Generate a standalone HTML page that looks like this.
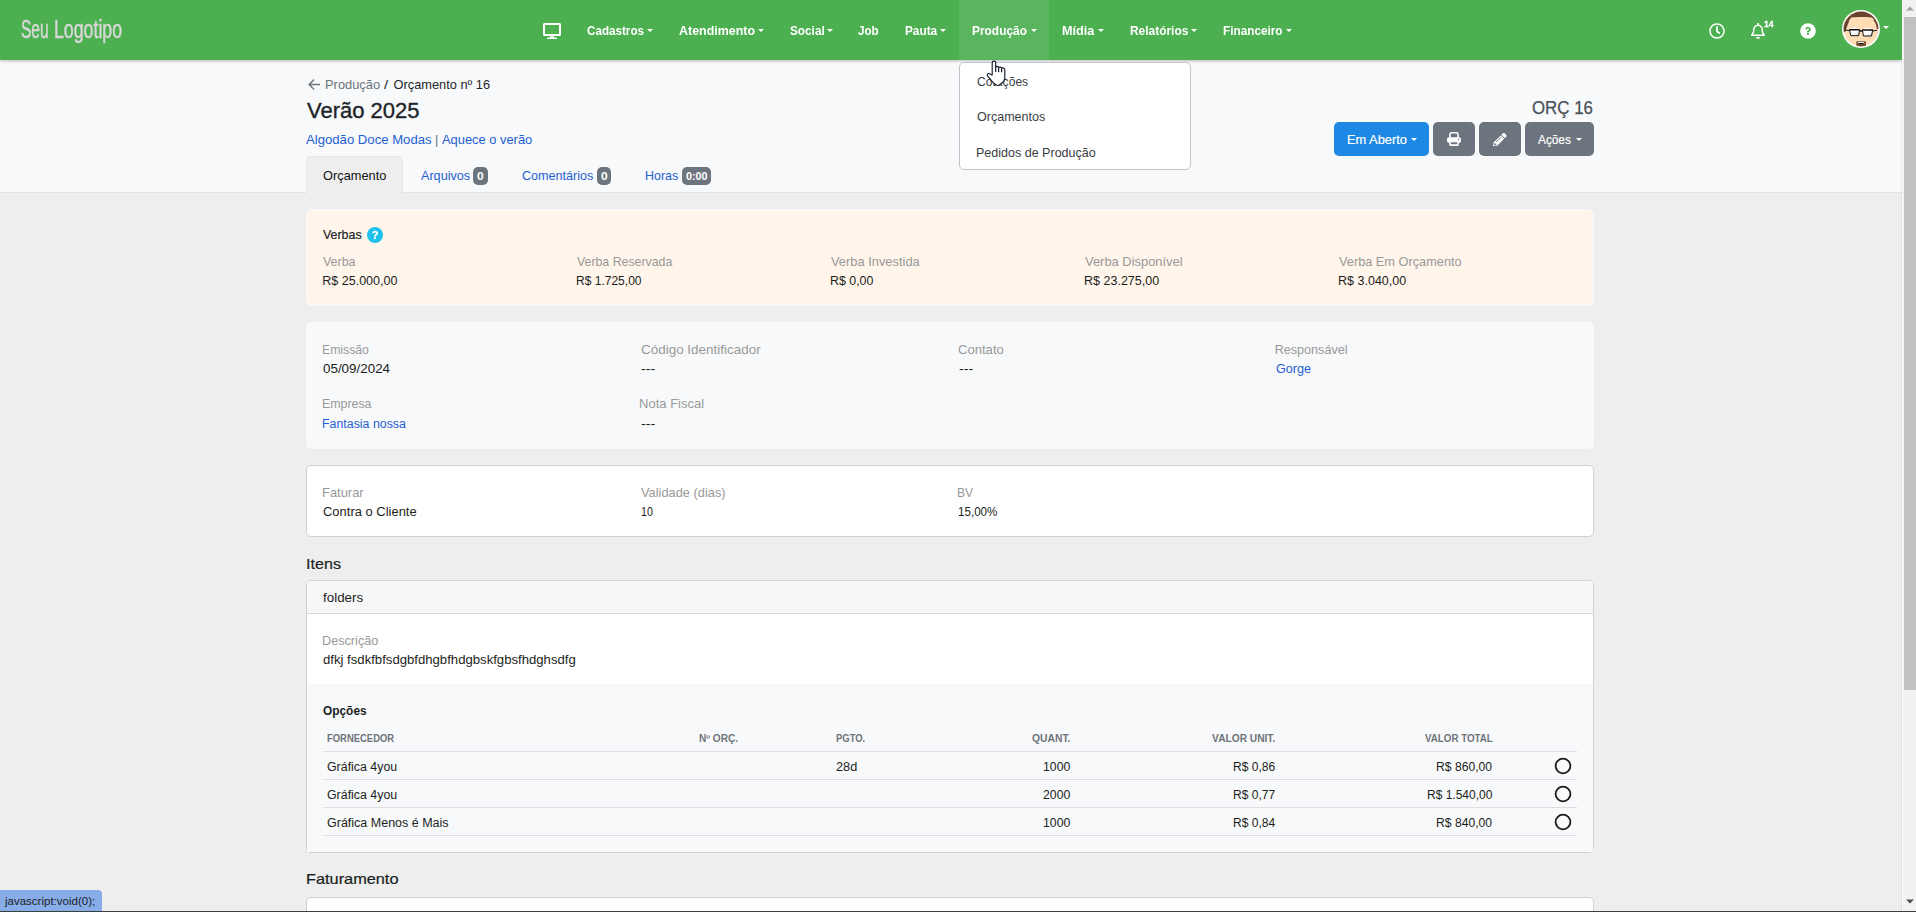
<!DOCTYPE html>
<html lang="pt-br">
<head>
<meta charset="utf-8">
<title>Orçamento nº 16</title>
<style>
*{box-sizing:border-box;margin:0;padding:0}
html,body{width:1916px;height:912px;overflow:hidden}
body{position:relative;background:#eeeeee;font-family:"Liberation Sans",sans-serif;font-size:13px;color:#212529}
.t{position:absolute;white-space:pre;transform-origin:0 50%;display:block}
.b{position:absolute}
.cr{position:absolute;width:0;height:0;border-left:3px solid transparent;border-right:3px solid transparent;border-top:3px solid #fff}
#nav{left:0;top:0;width:1902px;height:60px;background:#4caf50;box-shadow:0 1px 3px rgba(60,50,70,.32)}
#navact{left:959px;top:0;width:90px;height:60px;background:#5ab65e}
#hdr{left:0;top:60px;width:1902px;height:132px;background:#f8f9fa}
#hdrline{left:0;top:192px;width:1902px;height:1px;background:#dfe2e8}
#tab{left:306px;top:156px;width:97px;height:37px;background:#eeeeee;border:1px solid #e3e6ea;border-bottom:0;border-radius:5px 5px 0 0}
.badge{background:#6c757d;border-radius:5px;height:18px;top:167px}
.btn{top:122px;height:34px;border-radius:5px;background:#6c757d}
.card{left:306px;width:1288px;border-radius:5px}
.hl{left:323px;width:1254px;height:1px;background:#dddee1}
.radio{left:1554.7px;width:16.6px;height:16.6px;border:1.9px solid #1d1d1d;border-radius:50%}
#dd{left:959px;top:62px;width:232px;height:108px;background:#fff;border:1px solid #c3c4c7;border-radius:5px}
#sbtrack{left:1902px;top:0;width:14px;height:912px;background:#f1f1f1;border-left:1px solid #fbf7fb}
#sbthumb{left:1904px;top:17px;width:12px;height:673px;background:#c1c1c1}
#status{left:0;top:890px;width:102px;height:21px;background:#87ace8;border-top-right-radius:4px}
#bottomline{left:0;top:911px;width:1916px;height:1px;background:#36403c}
</style>
</head>
<body>
<!-- header background -->
<div class="b" id="hdr"></div>
<div class="b" id="hdrline"></div>
<div class="b" id="tab"></div>
<div class="b badge" style="left:473px;width:15px"></div>
<div class="b badge" style="left:597px;width:14px"></div>
<div class="b badge" style="left:682px;width:29px"></div>
<!-- breadcrumb arrow -->
<svg class="b" style="left:308px;top:79px" width="12" height="11" viewBox="0 0 12 11"><path d="M11.6 5.5H1.2M5.6 1L1.1 5.5l4.5 4.5" fill="none" stroke="#6c757d" stroke-width="1.5" stroke-linecap="round" stroke-linejoin="round"/></svg>
<!-- buttons -->
<div class="b btn" style="left:1334px;width:95px;background:#1e88e5"></div>
<div class="b btn" style="left:1433px;width:42px"></div>
<div class="b btn" style="left:1479px;width:42px"></div>
<div class="b btn" style="left:1525px;width:69px"></div>
<svg class="b" style="left:1447px;top:132.300px" width="14" height="14" viewBox="0 0 14 14"><path d="M3 5.600V2.300a1.500 1.500 0 0 1 1.500-1.500h5A1.500 1.500 0 0 1 11 2.300V5.600" stroke="#fff" stroke-width="1.600" fill="none"/><rect x="0" y="5.300" width="14" height="5.500" rx="1.900" fill="#fff"/><rect x="3" y="9.500" width="8" height="3.600" rx=".6" fill="#6c757d" stroke="#fff" stroke-width="1.600"/><circle cx="11.500" cy="7.400" r=".75" fill="#6c757d"/></svg>
<svg class="b" style="left:1493.3px;top:132.6px" width="13.6" height="13.6" viewBox="0 0 512 512"><path fill="#fff" d="M497.900 142.100l-46.100 46.100c-4.700 4.700-12.300 4.700-17 0l-111-111c-4.700-4.700-4.700-12.300 0-17l46.100-46.100c18.700-18.700 49.100-18.700 67.900 0l60.100 60.100c18.800 18.700 18.800 49.100 0 67.900zM284.200 99.800L21.600 362.400.4 483.900c-2.900 16.400 11.400 30.600 27.800 27.800l121.500-21.300 262.600-262.600c4.700-4.700 4.700-12.300 0-17l-111-111c-4.800-4.700-12.400-4.700-17.100 0zM124.100 339.900c-5.500-5.500-5.500-14.300 0-19.800l154-154c5.500-5.500 14.300-5.500 19.800 0s5.500 14.300 0 19.800l-154 154c-5.500 5.500-14.300 5.500-19.800 0zM88 424h48v36.300l-64.500 11.300-31.100-31.100L51.700 376H88v48z"/></svg>

<!-- VERBAS card -->
<div class="b card" style="top:209px;height:97px;background:#fff5eb;border:1px solid #f6f8fb"></div>
<svg class="b" style="left:367px;top:227px" width="16" height="16" viewBox="0 0 512 512"><circle cx="256" cy="256" r="256" fill="#1fc1ea"/><path fill="#fff" d="M262.650 120c-54.530 0-89.850 22.340-117.580 62.180a12 12 0 0 0 2.580 16.440l34.720 26.320a12 12 0 0 0 16.640-2.080c17.870-22.660 31.130-35.700 59.030-35.700 21.940 0 49.080 14.120 49.080 35.400 0 16.080-13.280 24.340-34.940 36.490-25.260 14.160-58.690 31.790-58.690 75.880V342a12 12 0 0 0 12 12h56a12 12 0 0 0 12-12v-4.200c0-30.570 89.340-31.840 89.340-114.570 0-62.300-64.620-103.230-120.180-103.230zM256 372c-25.360 0-46 20.640-46 46s20.640 46 46 46 46-20.640 46-46-20.640-46-46-46z" transform="translate(256 256) scale(.78) translate(-256 -290)"/></svg>
<!-- INFO card -->
<div class="b card" style="top:322px;height:127px;background:#f8f9fa"></div>
<!-- WHITE card -->
<div class="b card" style="top:465px;height:72px;background:#fff;border:1px solid #d1d1d2"></div>
<!-- ITENS card -->
<div class="b card" style="top:580px;height:273px;background:#fff;border:1px solid #d1d1d2">
  <div class="b" style="left:0;top:0;width:1286px;height:33px;background:#f7f7f7;border-bottom:1px solid #d7d8da;border-radius:4px 4px 0 0"></div>
  <div class="b" style="left:0;top:103px;width:1286px;height:168px;background:#f8f9fa"></div>
</div>
<div class="b hl" style="top:751px"></div>
<div class="b hl" style="top:779px"></div>
<div class="b hl" style="top:807px"></div>
<div class="b hl" style="top:835px"></div>
<svg class="b" style="left:1554px;top:757.0px" width="18" height="18" viewBox="0 0 18 18"><circle cx="9" cy="9" r="7.400" fill="none" stroke="#1c1c1c" stroke-width="1.800"/></svg>
<svg class="b" style="left:1554px;top:785.1px" width="18" height="18" viewBox="0 0 18 18"><circle cx="9" cy="9" r="7.400" fill="none" stroke="#1c1c1c" stroke-width="1.800"/></svg>
<svg class="b" style="left:1554px;top:813.1px" width="18" height="18" viewBox="0 0 18 18"><circle cx="9" cy="9" r="7.400" fill="none" stroke="#1c1c1c" stroke-width="1.800"/></svg>
<!-- FATURAMENTO card (cut) -->
<div class="b card" style="top:897px;height:60px;background:#fff;border:1px solid #d1d1d2"></div>

<span class="t" style="left:324.99px;top:77px;font-size:12.8px;line-height:15px;color:#6c757d;transform:scaleX(1.0063);">Produção</span>
<span class="t" style="left:384.40px;top:77px;font-size:12.8px;line-height:15px;color:#212529;transform:scaleX(1.1500);">/</span>
<span class="t" style="left:393.60px;top:77px;font-size:12.8px;line-height:15px;color:#212529;">Orçamento nº 16</span>
<span class="t" style="left:307.00px;top:99px;font-size:21.4px;line-height:24px;color:#212529;transform:scaleX(1.0283);-webkit-text-stroke:.35px #212529;">Verão 2025</span>
<span class="t" style="left:306.20px;top:132px;font-size:12.8px;line-height:15px;color:#1f60d2;transform:scaleX(1.0266);">Algodão Doce Modas</span>
<span class="t" style="left:435.00px;top:132px;font-size:12.8px;line-height:15px;color:#6c757d;">|</span>
<span class="t" style="left:442.10px;top:132px;font-size:12.8px;line-height:15px;color:#1f60d2;transform:scaleX(1.0064);">Aquece o verão</span>
<span class="t" style="left:323.10px;top:168px;font-size:12.8px;line-height:15px;color:#101214;">Orçamento</span>
<span class="t" style="left:420.80px;top:168px;font-size:12.8px;line-height:15px;color:#1f60d2;transform:scaleX(0.9860);">Arquivos</span>
<span class="t" style="left:522.20px;top:168px;font-size:12.8px;line-height:15px;color:#1f60d2;transform:scaleX(0.9841);">Comentários</span>
<span class="t" style="left:644.93px;top:168px;font-size:12.8px;line-height:15px;color:#1f60d2;transform:scaleX(0.9714);">Horas</span>
<span class="t" style="left:477.20px;top:170px;font-size:11.2px;line-height:12px;color:#fff;font-weight:bold;transform:scaleX(1.0667);">0</span>
<span class="t" style="left:601.40px;top:170px;font-size:11.2px;line-height:12px;color:#fff;font-weight:bold;transform:scaleX(1.0667);">0</span>
<span class="t" style="left:685.90px;top:170px;font-size:11.2px;line-height:12px;color:#fff;font-weight:bold;transform:scaleX(0.9563);">0:00</span>
<span class="t" style="left:1532.20px;top:98px;font-size:18.2px;line-height:20px;color:#495057;transform:scaleX(0.9271);-webkit-text-stroke:.25px #495057;">ORÇ 16</span>
<span class="t" style="left:1347.41px;top:132px;font-size:13px;line-height:15px;color:#fff;transform:scaleX(0.9870);-webkit-text-stroke:.2px #fff;">Em Aberto</span>
<span class="t" style="left:1538.40px;top:132px;font-size:13px;line-height:15px;color:#fff;transform:scaleX(0.9091);-webkit-text-stroke:.2px #fff;">Ações</span>
<span class="t" style="left:323.30px;top:228px;font-size:12.6px;line-height:14px;color:#212529;transform:scaleX(0.9843);-webkit-text-stroke:.2px #212529;">Verbas</span>
<span class="t" style="left:323.30px;top:255px;font-size:12.6px;line-height:14px;color:#999999;transform:scaleX(0.9876);">Verba</span>
<span class="t" style="left:322.30px;top:274px;font-size:12.5px;line-height:14px;color:#1b1e21;">R$ 25.000,00</span>
<span class="t" style="left:577.20px;top:255px;font-size:12.6px;line-height:14px;color:#999999;transform:scaleX(0.9794);">Verba Reservada</span>
<span class="t" style="left:576.24px;top:274px;font-size:12.5px;line-height:14px;color:#1b1e21;transform:scaleX(0.9619);">R$ 1.725,00</span>
<span class="t" style="left:831.20px;top:255px;font-size:12.6px;line-height:14px;color:#999999;transform:scaleX(1.0218);">Verba Investida</span>
<span class="t" style="left:830.21px;top:274px;font-size:12.5px;line-height:14px;color:#1b1e21;transform:scaleX(0.9900);">R$ 0,00</span>
<span class="t" style="left:1085.10px;top:255px;font-size:12.6px;line-height:14px;color:#999999;transform:scaleX(1.0253);">Verba Disponível</span>
<span class="t" style="left:1084.10px;top:274px;font-size:12.5px;line-height:14px;color:#1b1e21;">R$ 23.275,00</span>
<span class="t" style="left:1339.10px;top:255px;font-size:12.6px;line-height:14px;color:#999999;transform:scaleX(1.0125);">Verba Em Orçamento</span>
<span class="t" style="left:1338.10px;top:274px;font-size:12.5px;line-height:14px;color:#1b1e21;">R$ 3.040,00</span>
<span class="t" style="left:322.33px;top:343px;font-size:12.6px;line-height:14px;color:#999999;transform:scaleX(0.9707);">Emissão</span>
<span class="t" style="left:323.30px;top:362px;font-size:12.5px;line-height:14px;color:#1b1e21;transform:scaleX(1.0717);">05/09/2024</span>
<span class="t" style="left:640.50px;top:343px;font-size:12.6px;line-height:14px;color:#999999;transform:scaleX(1.0678);">Código Identificador</span>
<span class="t" style="left:641.10px;top:362px;font-size:12.5px;line-height:14px;color:#1b1e21;transform:scaleX(1.1440);">---</span>
<span class="t" style="left:958.20px;top:343px;font-size:12.6px;line-height:14px;color:#999999;transform:scaleX(1.0384);">Contato</span>
<span class="t" style="left:958.70px;top:362px;font-size:12.5px;line-height:14px;color:#1b1e21;transform:scaleX(1.1440);">---</span>
<span class="t" style="left:1274.70px;top:343px;font-size:12.6px;line-height:14px;color:#999999;">Responsável</span>
<span class="t" style="left:1275.70px;top:362px;font-size:12.5px;line-height:14px;color:#1f60d2;transform:scaleX(1.0118);">Gorge</span>
<span class="t" style="left:322.32px;top:397px;font-size:12.6px;line-height:14px;color:#999999;transform:scaleX(0.9820);">Empresa</span>
<span class="t" style="left:322.31px;top:417px;font-size:12.5px;line-height:14px;color:#1f60d2;transform:scaleX(0.9902);">Fantasia nossa</span>
<span class="t" style="left:639.47px;top:397px;font-size:12.6px;line-height:14px;color:#999999;transform:scaleX(1.0345);">Nota Fiscal</span>
<span class="t" style="left:641.10px;top:417px;font-size:12.5px;line-height:14px;color:#1b1e21;transform:scaleX(1.1440);">---</span>
<span class="t" style="left:322.27px;top:486px;font-size:12.6px;line-height:14px;color:#999999;transform:scaleX(1.0254);">Faturar</span>
<span class="t" style="left:323.30px;top:505px;font-size:12.5px;line-height:14px;color:#1b1e21;transform:scaleX(1.0368);">Contra o Cliente</span>
<span class="t" style="left:640.50px;top:486px;font-size:12.6px;line-height:14px;color:#999999;transform:scaleX(1.0184);">Validade (dias)</span>
<span class="t" style="left:640.70px;top:505px;font-size:12.5px;line-height:14px;color:#1b1e21;transform:scaleX(0.8529);">10</span>
<span class="t" style="left:957.24px;top:486px;font-size:12.6px;line-height:14px;color:#999999;transform:scaleX(0.9573);">BV</span>
<span class="t" style="left:958.40px;top:505px;font-size:12.5px;line-height:14px;color:#1b1e21;transform:scaleX(0.9295);">15,00%</span>
<span class="t" style="left:305.54px;top:555px;font-size:15.2px;line-height:17px;color:#1b1e21;transform:scaleX(1.0609);-webkit-text-stroke:.2px #212529;">Itens</span>
<span class="t" style="left:323.20px;top:591px;font-size:12.6px;line-height:14px;color:#1b1e21;transform:scaleX(1.0639);">folders</span>
<span class="t" style="left:322.19px;top:634px;font-size:12.6px;line-height:14px;color:#999999;transform:scaleX(1.0057);">Descrição</span>
<span class="t" style="left:323.20px;top:653px;font-size:12.5px;line-height:14px;color:#1b1e21;transform:scaleX(1.0512);">dfkj fsdkfbfsdgbfdhgbfhdgbskfgbsfhdghsdfg</span>
<span class="t" style="left:323.30px;top:703px;font-size:12.8px;line-height:15px;color:#1b1e21;font-weight:bold;transform:scaleX(0.9291);">Opções</span>
<span class="t" style="left:327.00px;top:733px;font-size:10.2px;line-height:11px;color:#6e747a;font-weight:bold;transform:scaleX(0.9263);">FORNECEDOR</span>
<span class="t" style="left:699.10px;top:733px;font-size:10.2px;line-height:11px;color:#6e747a;font-weight:bold;transform:scaleX(0.9912);">Nº ORÇ.</span>
<span class="t" style="left:836.00px;top:733px;font-size:10.2px;line-height:11px;color:#6e747a;font-weight:bold;transform:scaleX(0.9280);">PGTO.</span>
<span class="t" style="left:1031.70px;top:733px;font-size:10.2px;line-height:11px;color:#6e747a;font-weight:bold;transform:scaleX(1.0134);">QUANT.</span>
<span class="t" style="left:1212.10px;top:733px;font-size:10.2px;line-height:11px;color:#6e747a;font-weight:bold;">VALOR UNIT.</span>
<span class="t" style="left:1424.80px;top:733px;font-size:10.2px;line-height:11px;color:#6e747a;font-weight:bold;transform:scaleX(0.9587);">VALOR TOTAL</span>
<span class="t" style="left:327.00px;top:760px;font-size:12.5px;line-height:14px;color:#1b1e21;transform:scaleX(0.9899);">Gráfica 4you</span>
<span class="t" style="left:836.00px;top:760px;font-size:12.5px;line-height:14px;color:#1b1e21;transform:scaleX(1.0190);">28d</span>
<span class="t" style="left:1043.00px;top:760px;font-size:12.5px;line-height:14px;color:#1b1e21;transform:scaleX(0.9801);">1000</span>
<span class="t" style="left:1233.14px;top:760px;font-size:12.5px;line-height:14px;color:#1b1e21;transform:scaleX(0.9643);">R$ 0,86</span>
<span class="t" style="left:1436.33px;top:760px;font-size:12.5px;line-height:14px;color:#1b1e21;transform:scaleX(0.9712);">R$ 860,00</span>
<span class="t" style="left:327.00px;top:788px;font-size:12.5px;line-height:14px;color:#1b1e21;transform:scaleX(0.9899);">Gráfica 4you</span>
<span class="t" style="left:1043.00px;top:788px;font-size:12.5px;line-height:14px;color:#1b1e21;transform:scaleX(0.9801);">2000</span>
<span class="t" style="left:1233.14px;top:788px;font-size:12.5px;line-height:14px;color:#1b1e21;transform:scaleX(0.9643);">R$ 0,77</span>
<span class="t" style="left:1426.94px;top:788px;font-size:12.5px;line-height:14px;color:#1b1e21;transform:scaleX(0.9604);">R$ 1.540,00</span>
<span class="t" style="left:327.00px;top:816px;font-size:12.5px;line-height:14px;color:#1b1e21;">Gráfica Menos é Mais</span>
<span class="t" style="left:1043.00px;top:816px;font-size:12.5px;line-height:14px;color:#1b1e21;transform:scaleX(0.9801);">1000</span>
<span class="t" style="left:1233.14px;top:816px;font-size:12.5px;line-height:14px;color:#1b1e21;transform:scaleX(0.9643);">R$ 0,84</span>
<span class="t" style="left:1436.33px;top:816px;font-size:12.5px;line-height:14px;color:#1b1e21;transform:scaleX(0.9712);">R$ 840,00</span>
<span class="t" style="left:305.60px;top:871px;font-size:14.8px;line-height:16px;color:#1b1e21;transform:scaleX(1.1021);-webkit-text-stroke:.22px #1b1e21;">Faturamento</span>

<!-- NAV -->
<div class="b" id="nav"><div class="b" id="navact"></div></div>
<svg class="b" style="left:542.5px;top:23px" width="18" height="16" viewBox="0 0 576 512"><path fill="#fff" d="M528 0H48C21.500 0 0 21.500 0 48v320c0 26.500 21.500 48 48 48h192l-16 48h-72c-13.300 0-24 10.700-24 24s10.700 24 24 24h272c13.300 0 24-10.700 24-24s-10.700-24-24-24h-72l-16-48h192c26.500 0 48-21.500 48-48V48c0-26.500-21.500-48-48-48zm-16 352H64V64h448v288z"/></svg>
<!-- clock -->
<svg class="b" style="left:1709px;top:23px" width="16" height="16" viewBox="0 0 512 512"><path fill="#fff" d="M256 8C119 8 8 119 8 256s111 248 248 248 248-111 248-248S393 8 256 8zm0 448c-110.500 0-200-89.500-200-200S145.500 56 256 56s200 89.500 200 200-89.500 200-200 200zm61.800-104.400l-84.900-61.700c-3.100-2.300-4.900-5.900-4.900-9.700V116c0-6.600 5.400-12 12-12h32c6.600 0 12 5.400 12 12v141.700l66.800 48.600c5.400 3.900 6.500 11.400 2.600 16.800L334.600 349c-3.900 5.300-11.400 6.500-16.800 2.600z"/></svg>
<!-- bell -->
<svg class="b" style="left:1751px;top:23px" width="14" height="16" viewBox="0 0 448 512"><path fill="#fff" d="M439.390 362.290c-19.320-20.760-55.470-51.990-55.470-154.290 0-77.700-54.480-139.900-127.940-155.160V32c0-17.670-14.320-32-31.980-32s-31.980 14.330-31.980 32v20.840C118.560 68.100 64.080 130.300 64.080 208c0 102.300-36.150 133.530-55.470 154.290-6 6.450-8.660 14.160-8.610 21.710.11 16.400 12.980 32 32.100 32h383.800c19.120 0 32-15.600 32.100-32 .050-7.550-2.610-15.270-8.610-21.710zM67.530 368c21.220-27.970 44.420-74.330 44.530-159.420 0-.2-.060-.38-.060-.58 0-61.860 50.140-112 112-112s112 50.140 112 112c0 .2-.060.380-.060.580.11 85.100 23.310 131.460 44.530 159.420H67.530zM224 512c35.320 0 63.970-28.650 63.970-64H160.030c0 35.350 28.650 64 63.970 64z"/></svg>
<!-- help -->
<svg class="b" style="left:1800px;top:23px" width="16" height="16" viewBox="0 0 512 512"><circle cx="256" cy="256" r="250" fill="#fff"/><path fill="#4caf50" d="M262.650 120c-54.530 0-89.850 22.340-117.580 62.180a12 12 0 0 0 2.580 16.440l34.720 26.320a12 12 0 0 0 16.640-2.080c17.870-22.660 31.130-35.700 59.030-35.700 21.940 0 49.080 14.120 49.080 35.400 0 16.080-13.280 24.340-34.940 36.490-25.260 14.160-58.690 31.790-58.690 75.880V342a12 12 0 0 0 12 12h56a12 12 0 0 0 12-12v-4.200c0-30.570 89.340-31.840 89.340-114.570 0-62.300-64.620-103.230-120.180-103.230zM256 372c-25.360 0-46 20.640-46 46s20.640 46 46 46 46-20.640 46-46-20.640-46-46-46z" transform="translate(256 256) scale(.74) translate(-256 -290)"/></svg>
<!-- avatar -->
<svg class="b" style="left:1842px;top:10px" width="38" height="38" viewBox="0 0 38 38">
  <defs><clipPath id="av"><circle cx="19" cy="19" r="17.400"/></clipPath>
  <linearGradient id="lens" x1="0" y1="0" x2="1" y2="1"><stop offset="0" stop-color="#fff"/><stop offset=".55" stop-color="#fff"/><stop offset="1" stop-color="#c9ccd0"/></linearGradient></defs>
  <circle cx="19" cy="19" r="19" fill="#fff"/>
  <g clip-path="url(#av)">
    <rect width="38" height="38" fill="#fddcb6"/>
    <path d="M0 0H38V20L34.700 18.600C34.600 15.500 33.800 13.800 33 12.300L31.600 10.800L31.900 9.600C31.100 8.300 30.200 7.600 29 7.400C24 6.800 13.500 6.800 9.600 7.600C7.700 8.800 7.100 10.500 6.600 12.500C5.600 15.200 4.200 18 3.600 21.500L0 23Z" fill="#69432e"/>
    <ellipse cx="12.300" cy="19.200" rx="3.600" ry="1.600" fill="#fff"/>
    <ellipse cx="25.300" cy="19.400" rx="3.600" ry="1.600" fill="#fff"/>
    <path d="M7.600 19.600H17.500L16.700 25.600H8.800Z" fill="url(#lens)"/>
    <path d="M20.500 19.900H30.600L29.500 25.900H21.400Z" fill="url(#lens)"/>
    <path d="M2.800 19.900L7.400 20.700M35.200 20.200L30.800 21" fill="none" stroke="#151515" stroke-width="1"/>
    <path d="M7.200 19.700H17.700M20.300 20H30.900M17.500 21H20.600" fill="none" stroke="#0d0d0d" stroke-width="1.500"/>
    <path d="M7.500 19.800L8.800 25.700H16.700L17.500 19.800M20.500 20.100L21.400 26H29.500L30.700 20.100" fill="none" stroke="#151515" stroke-width="1"/>
    <path d="M14.300 32c0-.5.400-.8 1-.8h7.700c.6 0 1 .3 1 .8V38.500h-9.700z" fill="#7a5232"/>
    <path d="M16 32.200h6c-.4 1.400-1.500 2.100-3 2.100s-2.600-.7-3-2.100z" fill="#141414"/>
    <path d="M15.800 31.900h6.400l-.4 1h-5.600z" fill="#ececec"/>
  </g>
</svg>
<i class="cr" style="left:1883.300px;top:26px"></i>
<div class="b" style="left:0;top:0;width:1902px;height:60px;will-change:transform">
<span class="t" style="left:586.70px;top:23px;font-size:13.4px;line-height:15px;color:#fff;font-weight:bold;transform:scaleX(0.8702);">Cadastros</span>
<span class="t" style="left:678.60px;top:23px;font-size:13.4px;line-height:15px;color:#fff;font-weight:bold;transform:scaleX(0.9296);">Atendimento</span>
<span class="t" style="left:789.60px;top:23px;font-size:13.4px;line-height:15px;color:#fff;font-weight:bold;transform:scaleX(0.8805);">Social</span>
<span class="t" style="left:858.00px;top:23px;font-size:13.4px;line-height:15px;color:#fff;font-weight:bold;transform:scaleX(0.8677);">Job</span>
<span class="t" style="left:904.60px;top:23px;font-size:13.4px;line-height:15px;color:#fff;font-weight:bold;transform:scaleX(0.8807);">Pauta</span>
<span class="t" style="left:971.90px;top:23px;font-size:13.4px;line-height:15px;color:#fff;font-weight:bold;transform:scaleX(0.8900);">Produção</span>
<span class="t" style="left:1061.80px;top:23px;font-size:13.4px;line-height:15px;color:#fff;font-weight:bold;transform:scaleX(0.9432);">Mídia</span>
<span class="t" style="left:1129.90px;top:23px;font-size:13.4px;line-height:15px;color:#fff;font-weight:bold;transform:scaleX(0.8903);">Relatórios</span>
<span class="t" style="left:1222.90px;top:23px;font-size:13.4px;line-height:15px;color:#fff;font-weight:bold;transform:scaleX(0.8796);">Financeiro</span>
<span class="t" style="left:20.71px;top:14px;font-size:26.4px;line-height:30px;color:#d8d8d8;transform:scaleX(0.5894);-webkit-text-stroke:.5px #d8d8d8;">Seu</span>
<span class="t" style="left:54.25px;top:14px;font-size:26.4px;line-height:30px;color:#d8d8d8;transform:scaleX(0.6725);-webkit-text-stroke:.5px #d8d8d8;">Logotipo</span>
<span class="t" style="left:1764.10px;top:19px;font-size:9px;line-height:10px;color:#fff;font-weight:bold;transform:scaleX(0.9495);-webkit-text-stroke:.3px #fff;">14</span>
</div>
<i class="cr" style="left:647.3px;top:29.3px;border-top-color:#fff"></i>
<i class="cr" style="left:758.0px;top:29.3px;border-top-color:#fff"></i>
<i class="cr" style="left:827.4px;top:29.3px;border-top-color:#fff"></i>
<i class="cr" style="left:940.4px;top:29.3px;border-top-color:#fff"></i>
<i class="cr" style="left:1030.7px;top:29.3px;border-top-color:#fff"></i>
<i class="cr" style="left:1098.3px;top:29.3px;border-top-color:#fff"></i>
<i class="cr" style="left:1191.3px;top:29.3px;border-top-color:#fff"></i>
<i class="cr" style="left:1286.2px;top:29.3px;border-top-color:#fff"></i>
<i class="cr" style="left:1410.8px;top:138.3px;border-top-color:#fff"></i>
<i class="cr" style="left:1575.6px;top:138.3px;border-top-color:#fff"></i>

<!-- DROPDOWN -->
<div class="b" id="dd"></div>
<span class="t" style="left:976.60px;top:74px;font-size:12.8px;line-height:15px;color:#3a3d41;transform:scaleX(0.9466);">Cotações</span>
<span class="t" style="left:976.60px;top:109px;font-size:12.8px;line-height:15px;color:#3a3d41;transform:scaleX(0.9798);">Orçamentos</span>
<span class="t" style="left:975.62px;top:145px;font-size:12.8px;line-height:15px;color:#3a3d41;transform:scaleX(0.9781);">Pedidos de Produção</span>
<!-- hand cursor -->
<svg class="b" style="left:986px;top:60px" width="21" height="28" viewBox="0 0 21 28"><path d="M6.200 15V2.900A1.750 1.750 0 0 1 9.700 2.900V7C10.500 6.100 12.200 6.200 12.600 7.500C13.500 6.700 15.200 7 15.600 8.300C16.700 7.500 18.800 8.100 18.800 10V18.200C18.800 20.800 16.800 22.400 14.900 23.700C13.800 24.800 12.800 25.500 11.800 25.500C9.600 25.200 7.800 23.600 6.300 21.700L1.700 16.200C.5 14.700 1.900 12.900 3.500 13.700Z" fill="#fff" stroke="#171b2c" stroke-width="1.150" stroke-linejoin="round"/><path d="M9.700 6.800V12M12.600 7.600V12.200M15.600 8.500V12.200" fill="none" stroke="#171b2c" stroke-width="1.200"/></svg>

<!-- SCROLLBAR -->
<div class="b" style="left:1901px;top:61px;width:1px;height:851px;background:rgba(0,0,0,.055)"></div>
<div class="b" id="sbtrack"></div>
<div class="b" id="sbthumb"></div>
<svg class="b" style="left:1906px;top:6px" width="8" height="5" viewBox="0 0 8 5"><path d="M0 4.500L4 .5l4 4z" fill="#a3a3a3"/></svg>
<svg class="b" style="left:1906px;top:899px" width="8" height="5" viewBox="0 0 8 5"><path d="M0 .5h8L4 4.500z" fill="#505050"/></svg>

<!-- STATUS -->
<div class="b" id="status"></div>
<span class="t" style="left:5.01px;top:895px;font-size:11.4px;line-height:12px;color:#1c1f26;transform:scaleX(1.0101);">javascript:void(0);</span>
<div class="b" id="bottomline"></div>
</body>
</html>
